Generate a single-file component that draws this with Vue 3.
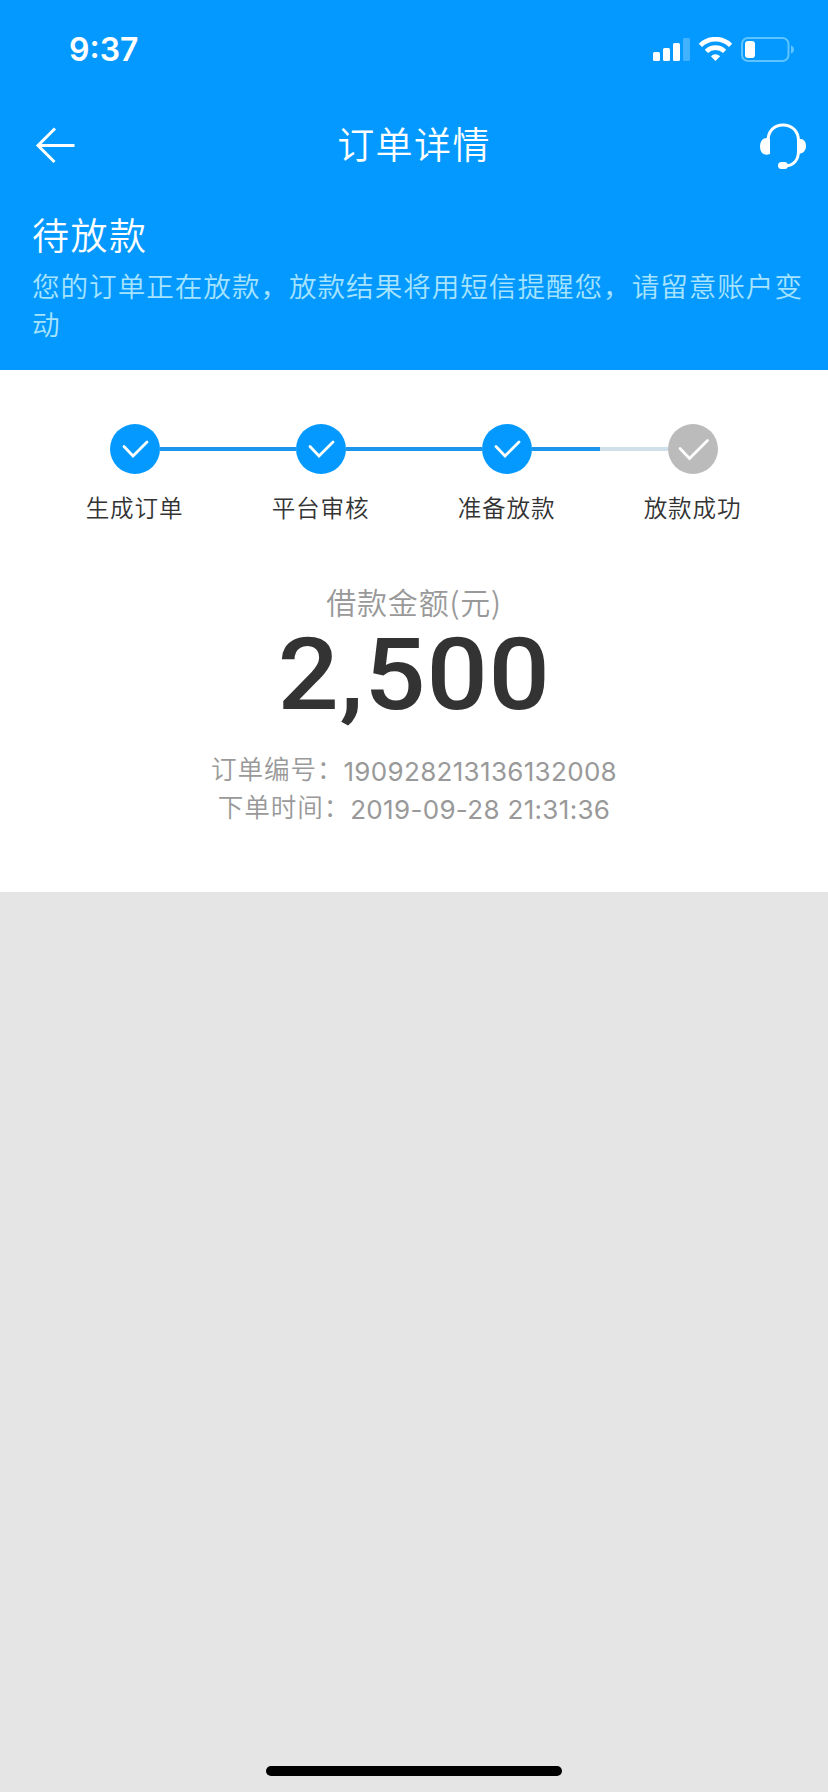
<script setup>
const steps = [
    { label: '生成订单', done: true },
    { label: '平台审核', done: true },
    { label: '准备放款', done: true },
    { label: '放款成功', done: false }
]

const details = [
    { label: '订单编号：', value: '190928213136132008' },
    { label: '下单时间：', value: '2019-09-28 21:31:36' }
]
</script>

<template>
    <div class="page">
        <header class="header">
            <div class="status-bar">
                <span class="clock">9:37</span>
                <svg class="status-icons" width="142" height="26" viewBox="0 0 142 26">
                    <g fill="#fff">
                        <rect x="0" y="15" width="7" height="9" rx="1.5" />
                        <rect x="10" y="11" width="7" height="13" rx="1.5" />
                        <rect x="20" y="6" width="7" height="18" rx="1.5" />
                        <rect x="30" y="1" width="7" height="23" rx="1.5" fill-opacity=".25" />
                    </g>
                    <g fill="none" stroke="#fff" stroke-width="4.6">
                        <path d="M47.4 8.3a21.5 21.5 0 0 1 30.2 0" />
                        <path d="M53.4 14.3a13 13 0 0 1 18.2 0" />
                    </g>
                    <path d="M62.5 24l-4.6-4.8a6.6 6.6 0 0 1 9.2 0z" fill="#fff" />
                    <rect x="89" y="1" width="46.5" height="23" rx="6" fill="none" stroke="#5fc3ff" stroke-width="2" />
                    <rect x="92" y="4" width="10" height="17" rx="3" fill="#fff" />
                    <path d="M138 8.5q3 1 3 4t-3 4z" fill="#5fc3ff" />
                </svg>
            </div>
            <nav class="nav">
                <svg class="back" width="42" height="40" viewBox="0 0 42 40" fill="none" stroke="#fff" stroke-width="3">
                    <path d="M22 3.5L5 20.500 21.500 37M4.500 20.500H41.500" />
                </svg>
                <h1 class="nav-title">订单详情</h1>
                <svg class="service" width="48" height="48" viewBox="0 0 48 48">
                    <path d="M9 19C9 9 15 3 24 3s15.500 6 15.500 16v10c0 9-5 14.500-13.500 15" fill="none" stroke="#fff" stroke-width="3" />
                    <path d="M11 16.500v15.500c-5.500 2-10-.5-10-7.500s4.500-10 10-8zM38.500 17c5.500-1 8.500 2 8.500 7s-3.500 8.500-8.500 7.500z" fill="#fff" />
                    <rect x="19" y="40" width="10" height="7" rx="3.5" fill="#fff" />
                </svg>
            </nav>
            <section class="summary">
                <h2 class="summary-title">待放款</h2>
                <p class="summary-text">您的订单正在放款，放款结果将用短信提醒您，请留意账户变动</p>
            </section>
        </header>

        <main class="panel">
            <ol class="steps">
                <li v-for="step in steps" :key="step.label" class="step" :class="{ done: step.done }">
                    <div class="track">
                        <span class="line" />
                        <svg class="dot" width="50" height="50" viewBox="0 0 50 50">
                            <circle cx="25" cy="25" r="25" />
                            <path v-if="step.done" d="M14 22.500l9 9.500 14-14" />
                            <path v-else d="M12 24.500l9.500 10 18-18" />
                        </svg>
                        <span class="line" />
                    </div>
                    <span class="step-label">{{ step.label }}</span>
                </li>
            </ol>

            <div class="amount-label">借款金额(元)</div>
            <div class="amount">2,500</div>

            <div class="details">
                <div v-for="item in details" :key="item.label" class="detail">
                    <span class="detail-label">{{ item.label }}</span>
                    <span class="detail-value">{{ item.value }}</span>
                </div>
            </div>
        </main>

        <footer class="home">
            <span class="home-bar" />
        </footer>
    </div>
</template>

<style>
body {
    margin: 0;
    background: #e5e5e5;
}
</style>

<style scoped>
.page {
    display: flex;
    flex-direction: column;
    height: 1792px;
    overflow: hidden;
    background: #e5e5e5;
    font-family: "Noto Sans CJK SC DemiLight", "Noto Sans CJK SC", sans-serif;
    font-weight: 350;
}

.header {
    box-sizing: border-box;
    height: 370px;
    background: #0399ff;
    color: #fff;
}

.status-bar {
    display: flex;
    justify-content: space-between;
    align-items: center;
    height: 100px;
    padding: 0 33px 0 69px;
}

.clock {
    font: 600 32px/40px Inter, sans-serif;
}

.nav {
    display: flex;
    justify-content: space-between;
    align-items: center;
    height: 90px;
    padding: 0 21px 2px 33px;
}

.nav-title {
    margin: -5px 6px 0 0;
    font-size: 37px;
    font-weight: 350;
    line-height: 50px;
    letter-spacing: 1.4px;
}

.back {
    margin-top: -1px;
}

.service {
    margin-top: 1px;
}

.summary {
    padding: 17px 20px 0 32px;
}

.summary-title {
    margin: 0;
    font-size: 37px;
    font-weight: 350;
    line-height: 50px;
    letter-spacing: 1.5px;
}

.summary-text {
    margin: 7px 0 0;
    font-size: 27.6px;
    line-height: 38px;
    letter-spacing: .96px;
    color: #a6e3ff;
}

.panel {
    box-sizing: border-box;
    height: 522px;
    padding-top: 54px;
    background: #fff;
    text-align: center;
}

.steps {
    display: flex;
    margin: 0;
    padding: 0 42px;
    list-style: none;
}

.step {
    flex: 1;
}

.track {
    display: flex;
    align-items: center;
}

.line {
    flex: 1;
    height: 4px;
    background: #cfe0ea;
}

.done .line {
    background: #1c96ec;
}

.step:first-child .line:first-child,
.step:last-child .line:last-child {
    background: transparent;
}

.dot circle {
    fill: #bbb;
}

.done .dot circle {
    fill: #0399ff;
}

.dot path {
    fill: none;
    stroke: #fff;
    stroke-width: 2.8;
    stroke-linecap: round;
}

.step-label {
    display: block;
    margin-top: 17px;
    padding-right: 1px;
    font-size: 23.6px;
    line-height: 32px;
    letter-spacing: .8px;
    color: #333;
}

.amount-label {
    margin-top: 57px;
    font-size: 30px;
    line-height: 42px;
    letter-spacing: .8px;
    color: #999;
}

.amount {
    height: 98px;
    padding-top: 3px;
    font: 500 100px/100px Roboto, sans-serif;
    letter-spacing: .6px;
    color: #333;
    transform: scaleX(1.08);
}

.details {
    margin-top: 26px;
    color: #999;
}

.detail {
    display: flex;
    justify-content: center;
    height: 38px;
}

.detail-label {
    font-size: 25.6px;
    line-height: 38px;
    letter-spacing: .9px;
}

.detail-value {
    padding-top: 4px;
    font: 400 26px/38px Inter, sans-serif;
    letter-spacing: .32px;
}

.home {
    display: flex;
    flex: 1;
    justify-content: center;
    align-items: flex-end;
    padding-bottom: 16px;
}

.home-bar {
    width: 296px;
    height: 10px;
    border-radius: 5px;
    background: #000;
}
</style>
